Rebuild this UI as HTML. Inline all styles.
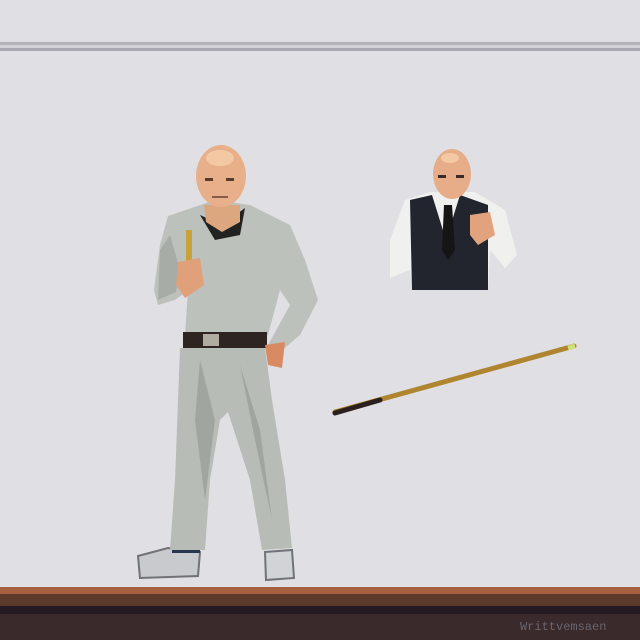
<!DOCTYPE html><html><head><style>html,body{margin:0;padding:0;background:#e0dfe3;width:640px;height:640px;overflow:hidden}</style></head><body>
<svg width="640" height="640" viewBox="0 0 640 640" xmlns="http://www.w3.org/2000/svg">
<rect width="640" height="640" fill="#e0dfe3"/>
<rect y="42" width="640" height="3" fill="#b4b3ba"/>
<rect y="45" width="640" height="3" fill="#d3d2d8"/>
<rect y="48" width="640" height="3" fill="#a9a8b0"/>
<rect y="587" width="640" height="7" fill="#a6603f"/>
<rect y="594" width="640" height="12" fill="#5b3a2c"/>
<rect y="606" width="640" height="8" fill="#241a24"/>
<rect y="614" width="640" height="26" fill="#3a2a2c"/>
<text x="520" y="630" font-family="Liberation Mono,monospace" font-size="12" fill="#6a6570">Writtvemsaen</text>
<line x1="335" y1="412" x2="574" y2="346" stroke="#b08530" stroke-width="5" stroke-linecap="round"/>
<line x1="335" y1="413" x2="380" y2="400" stroke="#2a2020" stroke-width="5" stroke-linecap="round"/>
<line x1="568" y1="348" x2="575" y2="346" stroke="#cfe07a" stroke-width="5"/>
<path d="M138 556 L168 548 L200 552 L198 576 L140 578 Z" fill="#c9cacd" stroke="#707278" stroke-width="2"/>
<path d="M265 552 L292 550 L294 578 L266 580 Z" fill="#d2d3d6" stroke="#707278" stroke-width="2"/>
<rect x="172" y="545" width="28" height="8" fill="#2a3550"/>
<path d="M180 348 L265 348 L272 400 L285 480 L292 548 L262 550 L250 480 L228 412 L220 420 L210 480 L205 550 L170 550 L175 480 L178 400 Z" fill="#b8bcb6"/>
<path d="M200 360 L215 420 L205 500 L195 420 Z M240 365 L260 430 L272 520 L255 440 Z" fill="#a0a59f"/>
<path d="M168 216 L215 200 L250 205 L290 225 L305 260 L318 300 L300 335 L280 352 L268 345 L290 305 L280 290 L268 335 L185 335 L188 290 L175 300 L158 305 L154 290 L160 245 Z" fill="#bdc1bc"/>
<path d="M160 250 L170 235 L180 270 L176 292 L158 300 Z" fill="#a8aca7"/>
<path d="M200 215 L222 225 L245 208 L240 235 L215 240 Z" fill="#222"/>
<rect x="183" y="332" width="84" height="16" fill="#2e2422"/>
<rect x="203" y="334" width="16" height="12" fill="#b0aca0"/>
<path d="M265 345 L285 342 L282 368 L268 365 Z" fill="#d88a62"/>
<rect x="186" y="230" width="6" height="45" fill="#c9a13a"/>
<path d="M178 262 L200 258 L204 285 L185 298 L176 285 Z" fill="#e0a07a"/>
<path d="M204 205 L240 205 L240 222 L222 232 L206 222 Z" fill="#dca77f"/>
<ellipse cx="221" cy="176" rx="25" ry="31" fill="#e8b08a"/>
<ellipse cx="220" cy="158" rx="14" ry="8" fill="#f3c9a4"/>
<rect x="205" y="178" width="8" height="3" fill="#5a3a2a"/><rect x="226" y="178" width="8" height="3" fill="#5a3a2a"/>
<rect x="212" y="196" width="16" height="2" fill="#8a5a45"/>
<path d="M405 200 L430 192 L475 192 L505 210 L517 255 L505 268 L490 250 L488 290 L412 290 L410 270 L390 278 L390 240 Z" fill="#f0f0ee"/>
<path d="M410 200 L432 195 L446 240 L460 195 L488 205 L488 290 L412 290 Z" fill="#22242e"/>
<path d="M444 205 L452 205 L455 250 L448 260 L442 250 Z" fill="#151515"/>
<path d="M470 215 L490 212 L495 235 L478 245 L470 235 Z" fill="#e2a27e"/>
<ellipse cx="452" cy="174" rx="19" ry="25" fill="#e6ad88"/>
<ellipse cx="450" cy="158" rx="9" ry="5" fill="#f3c9a4"/>
<rect x="438" y="175" width="8" height="3" fill="#3a2a2a"/><rect x="456" y="175" width="8" height="3" fill="#3a2a2a"/>
</svg>
</body></html>
